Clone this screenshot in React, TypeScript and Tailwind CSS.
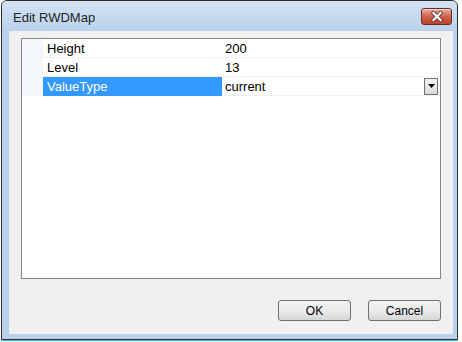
import React from "react";

const rows = [
  { name: "Height", value: "200" },
  { name: "Level", value: "13" },
  { name: "ValueType", value: "current", selected: true },
];

function CloseButton() {
  return (
    <div className="w-[31px] h-[17px] rounded-[3px] border border-[#6e2a20] bg-gradient-to-b from-[#eab0a2] via-[#d0624c] to-[#bb4329] flex items-center justify-center shadow-[inset_0_1px_0_rgba(255,255,255,0.5)]">
      <svg width="14" height="11" viewBox="0 0 14 11">
        <path d="M3.5 2 L10.5 9 M10.5 2 L3.5 9" stroke="#6a3a34" strokeWidth="4" strokeLinecap="square" />
        <path d="M3.5 2 L10.5 9 M10.5 2 L3.5 9" stroke="#ffffff" strokeWidth="2.2" strokeLinecap="square" />
      </svg>
    </div>
  );
}

function DropButton() {
  return (
    <div className="w-[14px] h-[17px] border border-[#707070] bg-gradient-to-b from-[#f2f2f2] to-[#dcdcdc] flex items-center justify-center">
      <svg width="7" height="4" viewBox="0 0 7 4">
        <path d="M0 0 L7 0 L3.5 4 Z" fill="#000" />
      </svg>
    </div>
  );
}

export default function App() {
  return (
    <div className="w-[462px] h-[342px] bg-white overflow-hidden" style={{ fontFamily: '"Liberation Sans", Arial, sans-serif' }}>
      <div className="ml-px w-[457px] h-[340px] border border-[#2c2c2c] rounded-t-[6px] bg-[#b9d1ea] flex flex-col pl-[7px] pr-[4px] pb-[5px]">
        {/* title bar */}
        <div className="h-[30px] -ml-[7px] -mr-[4px] pl-[11px] pr-[5px] rounded-t-[5px] bg-gradient-to-b from-[#d3e3f4] to-[#b9d1ea] flex items-center justify-between">
          <span className="text-[13px] text-[#1e1e1e] leading-none pt-[2px]">Edit RWDMap</span>
          <CloseButton />
        </div>

        {/* client area */}
        <div className="flex-1 bg-[#f0f0f0] flex flex-col px-[12px] pt-[7px] pb-[13px]">
          <div className="h-[241px] border border-[#828790] bg-white flex flex-col">
            {rows.map((r) => (
              <div key={r.name} className="flex h-[19px] text-[13px]">
                <div className="w-[21px] bg-[#f3f6fb]" />
                <div
                  className={
                    r.selected
                      ? "w-[179px] bg-[#3399ff] text-white pl-[4px] pt-px flex items-center"
                      : "w-[179px] border-b border-[#f0f0f0] text-black pl-[4px] pt-px flex items-center"
                  }
                >
                  {r.name}
                </div>
                <div className="flex-1 border-b border-[#f0f0f0] flex items-center justify-between pl-[3px] pr-[2px] text-black">
                  <span className="pt-px">{r.value}</span>
                  {r.selected && <DropButton />}
                </div>
              </div>
            ))}
          </div>

          <div className="mt-auto flex justify-end gap-[17px]">
            <button className="w-[73px] h-[21px] rounded-[3px] border border-[#707070] bg-gradient-to-b from-[#f2f2f2] via-[#ebebeb] to-[#d6d6d6] text-[12px] text-black leading-none pt-px">
              OK
            </button>
            <button className="w-[73px] h-[21px] rounded-[3px] border border-[#707070] bg-gradient-to-b from-[#f2f2f2] via-[#ebebeb] to-[#d6d6d6] text-[12px] text-black leading-none pt-px">
              Cancel
            </button>
          </div>
        </div>
      </div>
      <div className="ml-px w-[457px] h-px bg-[#3cc3e6]" />
    </div>
  );
}
